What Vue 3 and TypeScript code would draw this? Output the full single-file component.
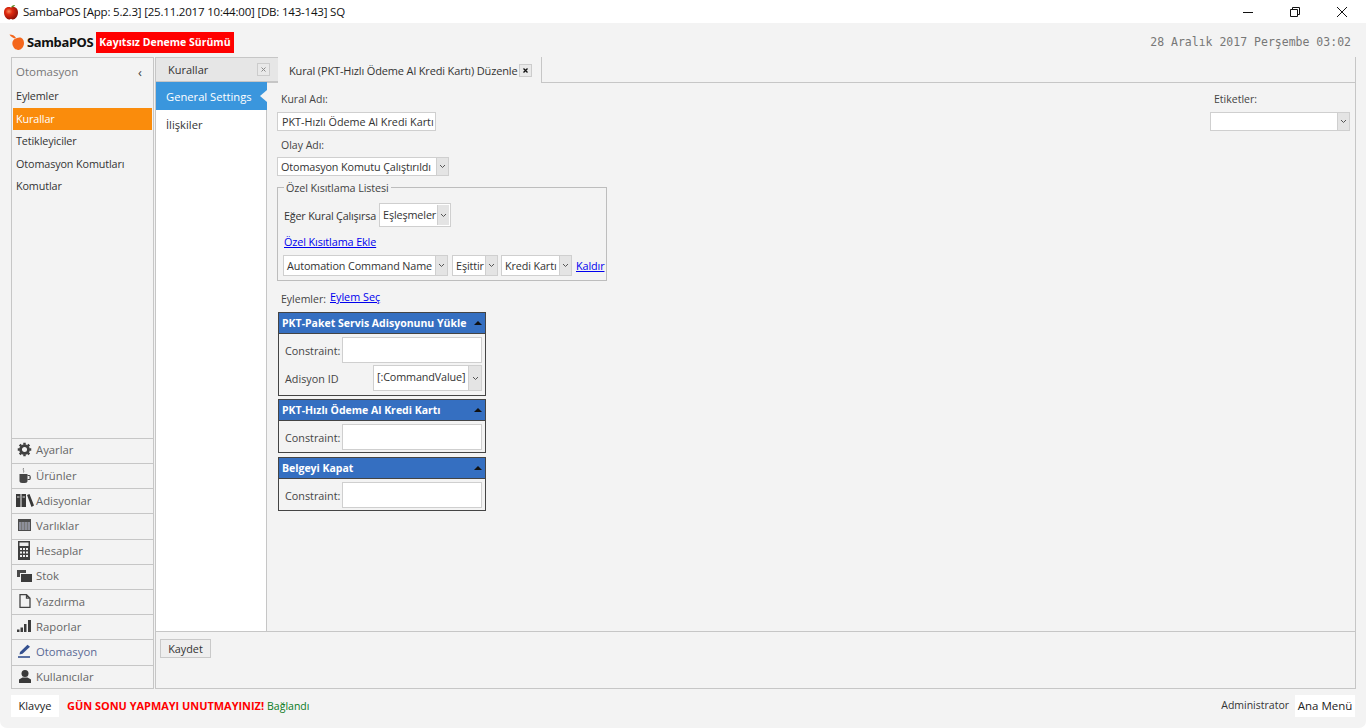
<script setup lang="ts">
const automation: string[] = ['Eylemler', 'Kurallar', 'Tetikleyiciler', 'Otomasyon Komutları', 'Komutlar']
const accordion: { name: string; icon: string }[] = [
  { name: 'Ayarlar', icon: 'gear' },
  { name: 'Ürünler', icon: 'cup' },
  { name: 'Adisyonlar', icon: 'books' },
  { name: 'Varlıklar', icon: 'table' },
  { name: 'Hesaplar', icon: 'calc' },
  { name: 'Stok', icon: 'stock' },
  { name: 'Yazdırma', icon: 'doc' },
  { name: 'Raporlar', icon: 'bars' },
  { name: 'Otomasyon', icon: 'pen' },
  { name: 'Kullanıcılar', icon: 'user' },
]
</script>

<template>
  <div class="window">
    <header class="titlebar">
      <svg class="title-icon" width="16" height="16" viewBox="0 0 16 16">
        <defs>
          <radialGradient id="apple" cx="35%" cy="35%" r="70%">
            <stop offset="0" stop-color="#f58a5a" />
            <stop offset=".35" stop-color="#e02a10" />
            <stop offset="1" stop-color="#8a0e06" />
          </radialGradient>
        </defs>
        <path d="M8 3.500C11 2.300 15 3.500 15 8.500C15 12.500 12 15.500 10 15.500C9 15.500 8.500 15 8 15C7.500 15 7 15.500 6 15.500C4 15.500 1 12.500 1 8.500C1 3.500 5 2.300 8 3.500Z" fill="url(#apple)" />
        <path d="M8 3.500C8.500 2 10 .8 12 1 11.500 2.500 10 3.500 8 3.500Z" fill="#5a8a20" />
      </svg>
      <span class="title-text">SambaPOS [App: 5.2.3] [25.11.2017 10:44:00] [DB: 143-143] SQ</span>
      <div class="win-controls">
        <svg width="12" height="12" viewBox="0 0 12 12"><path d="M1 6.500H11" stroke="#111" fill="none" /></svg>
        <svg width="12" height="12" viewBox="0 0 12 12"><path d="M1.500 3.500H8.500V10.500H1.500ZM3.500 3.500V1.500H10.500V8.500H8.500" stroke="#111" fill="none" /></svg>
        <svg width="12" height="12" viewBox="0 0 12 12"><path d="M1 1L11 11M11 1L1 11" stroke="#111" fill="none" /></svg>
      </div>
    </header>

    <div class="app">
      <div class="topbar">
        <div class="logo">
          <svg width="16" height="18" viewBox="0 0 16 18">
            <path d="M8 5C11 3.500 15 5 15 10C15 14 12 17 9.500 17C8.500 17 8 16.500 7.500 16.500C6 16.500 5 15 4 13C3 11 2.500 6.500 8 5Z" fill="#f4661c" />
            <path d="M6 5.500C4 5 1.500 3.500 .5 1.500C3 1.500 6 2.500 7 5Z" fill="#f4661c" />
          </svg>
          <span class="logo-text">SambaPOS</span>
          <span class="badge">Kayıtsız Deneme Sürümü</span>
        </div>
        <div class="date">28 Aralık 2017 Perşembe 03:02</div>
      </div>

      <div class="main">
        <aside class="sidebar">
          <div class="side-head"><span>Otomasyon</span><b class="chev">‹</b></div>
          <div class="side-list">
            <div v-for="(item, i) in automation" :key="item" class="side-item" :class="{ selected: i === 1 }">{{ item }}</div>
          </div>
          <div class="acc">
            <div v-for="row in accordion" :key="row.name" class="acc-row" :class="{ 'acc-blue': row.icon === 'pen' }">
              <span class="acc-icon">
                <svg v-if="row.icon === 'gear'" width="15" height="15" viewBox="0 0 16 16"><circle cx="8" cy="8" r="4.200" fill="none" stroke="#404040" stroke-width="3" /><path d="M8 .8V3M8 13V15.200M.8 8H3M13 8H15.200M2.900 2.900L4.500 4.500M11.500 11.500L13.100 13.100M13.100 2.900L11.500 4.500M4.500 11.500L2.900 13.100" stroke="#404040" stroke-width="2.600" /></svg>
                <svg v-else-if="row.icon === 'cup'" width="12" height="15" viewBox="0 0 12 15"><path d="M.5 6H8.500V13C8.500 14 7.500 15 6 15H3C1.500 15 .5 14 .5 13Z" fill="#454545" /><path d="M8.500 7.500H10.500C11.500 7.500 11.500 11.500 10.500 11.500H8.500" fill="none" stroke="#454545" stroke-width="1.200" /><path d="M4.500 0C3.500 2 5.500 2.500 4.500 4.500" stroke="#888" fill="none" /></svg>
                <svg v-else-if="row.icon === 'books'" width="18" height="13" viewBox="0 0 18 13"><path d="M0 0H4.500V13H0ZM5.500 0H10V13H5.500ZM11 1L13.500 0L18 11.500L15.500 13Z" fill="#383838" /><path d="M1 3H3.500M6.500 3H9" stroke="#ddd" /></svg>
                <svg v-else-if="row.icon === 'table'" width="13" height="12" viewBox="0 0 13 12"><rect x="0" y="0" width="13" height="12" fill="#4c4c4c" /><rect x="1" y="3" width="11" height="8" fill="#8d8f9a" /><path d="M3.500 3V11M6.500 3V11M9.500 3V11" stroke="#777" /></svg>
                <svg v-else-if="row.icon === 'calc'" width="13" height="19" viewBox="0 0 13 19"><rect x="0" y="0" width="12" height="19" fill="#3e3e3e" /><rect x="1.500" y="1.500" width="9" height="3.500" fill="#eee" /><path d="M2 7H4V9H2ZM5 7H7V9H5ZM8 7H10V9H8ZM2 10.500H4V12.500H2ZM5 10.500H7V12.500H5ZM8 10.500H10V12.500H8ZM2 14H4V16H2ZM5 14H7V16H5ZM8 14H10V16H8Z" fill="#eee" /></svg>
                <svg v-else-if="row.icon === 'stock'" width="16" height="12" viewBox="0 0 16 12"><path d="M0 0H9V3H3V7H0Z" fill="#4a4a4a" /><rect x="4" y="4" width="11" height="8" fill="#3c3c3c" /></svg>
                <svg v-else-if="row.icon === 'doc'" width="12" height="14" viewBox="0 0 12 14"><path d="M1 .7H7.500L11 4.200V13.300H1Z M7.500 .7V4.200H11" fill="none" stroke="#444" stroke-width="1.300" /></svg>
                <svg v-else-if="row.icon === 'bars'" width="15" height="12" viewBox="0 0 15 12"><path d="M0 9.500H2.500V12H0ZM3.500 7.500H6V12H3.500ZM7 4H9.500V12H7ZM11 0H14V12H11Z" fill="#3c3c3c" /></svg>
                <svg v-else-if="row.icon === 'pen'" width="14" height="14" viewBox="0 0 14 14"><path d="M2 8L9.500 .8L12 2.800L4.500 9.800L1.500 10.500Z" fill="#34508f" /><path d="M0 13H12" stroke="#34508f" stroke-width="1.600" /></svg>
                <svg v-else width="14" height="13" viewBox="0 0 14 13"><circle cx="7" cy="3.500" r="3.500" fill="#3a3a3a" /><path d="M1 13V9.500L4.500 7.500H9.500L13 9.500V13Z" fill="#3a3a3a" /></svg>
              </span>
              <span>{{ row.name }}</span>
            </div>
          </div>
        </aside>

        <section class="workspace">
          <div class="tabs">
            <div class="tab tab-off">
              <span>Kurallar</span>
              <span class="tab-x"><svg width="7" height="7" viewBox="0 0 7 7"><path d="M1.500 1.500L5.500 5.500M5.500 1.500L1.500 5.500" stroke="#888" fill="none" /></svg></span>
            </div>
            <div class="tab tab-on">
              <span class="tab-title">Kural (PKT-Hızlı Ödeme Al Kredi Kartı) Düzenle</span>
              <span class="tab-x"><svg width="7" height="7" viewBox="0 0 7 7"><path d="M1.500 1.500L5.500 5.500M5.500 1.500L1.500 5.500" stroke="#111" stroke-width="1.300" fill="none" /></svg></span>
            </div>
          </div>

          <div class="content">
            <nav class="leftnav">
              <div class="nav-on">General Settings<i class="notch"></i></div>
              <div class="nav-off">İlişkiler</div>
            </nav>

            <div class="form">
              <div class="form-left">
                <div class="lbl">Kural Adı:</div>
                <div class="box name-box">PKT-Hızlı Ödeme Al Kredi Kartı</div>
                <div class="lbl lbl-olay">Olay Adı:</div>
                <div class="sel event-sel"><span class="sel-text">Otomasyon Komutu Çalıştırıldı</span><span class="arrow"><svg width="7" height="5" viewBox="0 0 7 5"><path d="M1 1L3.500 3.500L6 1" fill="none" stroke="#555" /></svg></span></div>

                <fieldset class="fset">
                  <legend>Özel Kısıtlama Listesi</legend>
                  <div class="match-row">
                    <span class="match-lbl">Eğer Kural Çalışırsa</span>
                    <div class="sel match-sel"><span class="sel-text">Eşleşmeler</span><span class="arrow"><svg width="7" height="5" viewBox="0 0 7 5"><path d="M1 1L3.500 3.500L6 1" fill="none" stroke="#555" /></svg></span></div>
                  </div>
                  <a class="link add-link">Özel Kısıtlama Ekle</a>
                  <div class="cond-row">
                    <div class="sel cond-a"><span class="sel-text">Automation Command Name</span><span class="arrow"><svg width="7" height="5" viewBox="0 0 7 5"><path d="M1 1L3.500 3.500L6 1" fill="none" stroke="#555" /></svg></span></div>
                    <div class="sel cond-b"><span class="sel-text">Eşittir</span><span class="arrow"><svg width="7" height="5" viewBox="0 0 7 5"><path d="M1 1L3.500 3.500L6 1" fill="none" stroke="#555" /></svg></span></div>
                    <div class="sel cond-c"><span class="sel-text">Kredi Kartı</span><span class="arrow"><svg width="7" height="5" viewBox="0 0 7 5"><path d="M1 1L3.500 3.500L6 1" fill="none" stroke="#555" /></svg></span></div>
                    <a class="link">Kaldır</a>
                  </div>
                </fieldset>

                <div class="actions-head"><span>Eylemler:</span><a class="link">Eylem Seç</a></div>

                <div class="panel">
                  <div class="panel-head"><span>PKT-Paket Servis Adisyonunu Yükle</span><i class="tri"></i></div>
                  <div class="panel-body first-body">
                    <div class="p-row"><span class="p-lbl">Constraint:</span><div class="p-input"></div></div>
                    <div class="p-row p-row2">
                      <span class="p-lbl2">Adisyon ID</span>
                      <div class="sel p-sel"><span class="sel-text">[:CommandValue]</span><span class="arrow"><svg width="7" height="5" viewBox="0 0 7 5"><path d="M1 1L3.500 3.500L6 1" fill="none" stroke="#555" /></svg></span></div>
                    </div>
                  </div>
                </div>
                <div class="panel gap3">
                  <div class="panel-head"><span>PKT-Hızlı Ödeme Al Kredi Kartı</span><i class="tri"></i></div>
                  <div class="panel-body"><div class="p-row"><span class="p-lbl">Constraint:</span><div class="p-input"></div></div></div>
                </div>
                <div class="panel gap4">
                  <div class="panel-head"><span>Belgeyi Kapat</span><i class="tri"></i></div>
                  <div class="panel-body"><div class="p-row"><span class="p-lbl">Constraint:</span><div class="p-input"></div></div></div>
                </div>
              </div>

              <div class="form-right">
                <div class="lbl">Etiketler:</div>
                <div class="sel tag-sel"><span class="sel-text"></span><span class="arrow"><svg width="7" height="5" viewBox="0 0 7 5"><path d="M1 1L3.500 3.500L6 1" fill="none" stroke="#555" /></svg></span></div>
              </div>
            </div>
          </div>

          <div class="savebar"><button class="save" type="button">Kaydet</button></div>
        </section>
      </div>

      <footer class="statusbar">
        <div class="white-btn klavye">Klavye</div>
        <span class="warn">GÜN SONU YAPMAYI UNUTMAYINIZ!</span>
        <span class="conn">Bağlandı</span>
        <span class="admin">Administrator</span>
        <div class="white-btn menu">Ana Menü</div>
      </footer>
    </div>
  </div>
</template>

<style>
html, body { margin: 0; background: #fff; overflow: hidden; }
</style>

<style scoped>
.window {
  width: 1366px;
  height: 728px;
  display: flex;
  flex-direction: column;
  font-family: "Open Sans", "Noto Sans", sans-serif;
  font-size: 11px;
  color: #333;
  background: #fff;
}
.titlebar {
  height: 23px;
  display: flex;
  align-items: center;
  background: #fff;
  flex: none;
}
.title-icon { margin-left: 3px; }
.title-text { margin-left: 4px; font-size: 11.500px; letter-spacing: -.2px; color: #111; }
.win-controls { margin-left: auto; display: flex; gap: 35px; padding-right: 18px; align-items: center; }
.app {
  flex: 1;
  min-height: 0;
  background: #f3f3f3;
  display: flex;
  flex-direction: column;
  border-radius: 0 0 7px 7px;
}
.topbar {
  height: 34px;
  box-sizing: border-box;
  flex: none;
  display: flex;
  align-items: center;
  justify-content: space-between;
  padding: 4px 15px 0 9px;
}
.logo { display: flex; align-items: center; }
.logo-text { font-family: "Noto Sans", sans-serif; font-weight: 700; font-size: 13px; color: #111; margin-left: 2px; letter-spacing: -.35px; }
.badge {
  margin-left: 3px;
  background: #f00;
  color: #fff;
  font-weight: 700;
  font-size: 10.500px;
  height: 21px;
  line-height: 21px;
  padding: 0 3px;
  white-space: nowrap;
}
.date { font-family: "DejaVu Sans Mono", monospace; font-size: 11.500px; color: #777; }
.main {
  height: 632px;
  flex: none;
  display: flex;
  padding: 0 10px 0 11px;
  gap: 1px;
}
.sidebar {
  width: 141px;
  flex: none;
  border: 1px solid #c6c6c6;
  display: flex;
  flex-direction: column;
  box-sizing: content-box;
  height: 630px;
}
.side-head {
  height: 27px;
  display: flex;
  align-items: center;
  justify-content: space-between;
  padding: 0 11px 0 4px;
  font-size: 11.500px;
  color: #777;
  flex: none;
}
.chev { font-weight: 400; font-size: 13px; color: #444; }
.side-list { flex: 1; padding: 0 1px; }
.side-item { height: 22.500px; line-height: 22px; padding-left: 3px; color: #333; font-size: 10.800px; letter-spacing: -.12px; }
.side-item.selected { background: #fa8c0c; color: #fff; }
.acc { flex: none; }
.acc-row {
  height: 25.200px;
  box-sizing: border-box;
  border-top: 1px solid #c6c6c6;
  padding-bottom: 2px;
  display: flex;
  align-items: center;
  font-size: 11.300px;
  color: #666;
}
.acc-row:last-child { height: 23.500px; padding-bottom: 0; }
.acc-blue { color: #5a6a95; }
.acc-icon { width: 24px; display: flex; justify-content: center; padding-left: 1px; box-sizing: border-box; }
.workspace {
  flex: 1;
  min-width: 0;
  border: 1px solid #c6c6c6;
  border-top: none;
  display: flex;
  flex-direction: column;
}
.tabs { height: 25px; display: flex; flex: none; }
.tab { display: flex; align-items: center; box-sizing: border-box; color: #333; padding-top: 1px; }
.tab-off {
  width: 122px;
  height: 25px;
  background: #e6e6e6;
  border-top: 1px solid #c6c6c6;
  border-bottom: 1px solid #c6c6c6;
  padding: 0 8px 0 12px;
  justify-content: space-between;
}
.tab-on {
  width: 264px;
  height: 26px;
  background: #f3f3f3;
  border-right: 1px solid #c6c6c6;
  padding: 1px 9px 0 11px;
  justify-content: space-between;
  position: relative;
  z-index: 1;
  white-space: nowrap;
}
.tab-title { letter-spacing: -.15px; }
.tab-x {
  width: 11px;
  height: 11px;
  background: #e9e9e9;
  border: 1px solid #ccc;
  display: flex;
  align-items: center;
  justify-content: center;
}
.content {
  flex: 1;
  min-height: 0;
  display: flex;
  border-top: 1px solid #c6c6c6;
}
.leftnav { width: 110px; flex: none; background: #fff; border-right: 1px solid #c6c6c6; }
.nav-on {
  height: 28px;
  margin-top: -1px;
  background: #3a96dd;
  color: #fff;
  font-size: 11.200px;
  line-height: 30px;
  padding-left: 10px;
  position: relative;
  margin-right: -1px;
}
.notch {
  position: absolute;
  right: 0;
  top: 8px;
  width: 0;
  height: 0;
  border: 6px solid transparent;
  border-left: none;
  border-right: 7px solid #f3f3f3;
}
.nav-off { font-size: 11.200px; height: 28px; line-height: 30px; padding-left: 10px; color: #333; }
.form { flex: 1; min-width: 0; display: flex; justify-content: space-between; padding: 7px 5px 0 10px; }
.form-left { width: 330px; }
.lbl { height: 18px; line-height: 18px; padding-left: 4px; font-size: 10.500px; color: #444; }
.lbl-olay { margin-top: 5px; height: 21px; line-height: 18px; }
.box, .sel {
  background: #fff;
  border: 1px solid #cfcfcf;
  box-sizing: border-box;
  height: 19px;
  line-height: 17px;
  color: #333;
  white-space: nowrap;
  font-size: 10.800px;
}
.lbl + .box { margin-top: 4px; }
.name-box { width: 159px; padding-left: 4px; overflow: hidden; }
.sel { display: flex; }
.sel-text { flex: 1; min-width: 0; padding-left: 3px; overflow: hidden; letter-spacing: -.12px; }
.arrow {
  width: 11px;
  flex: none;
  background: #e4e4e4;
  border-left: 1px solid #cfcfcf;
  display: flex;
  align-items: center;
  justify-content: center;
}
.event-sel { width: 172px; }
.fset {
  margin: 5px 0 0;
  padding: 0 2px 0 6px;
  width: 330px;
  height: 100px;
  box-sizing: border-box;
  border: 1px solid #bdbdbd;
}
.fset legend { padding: 0 2px; font-size: 10.800px; line-height: 13px; color: #444; letter-spacing: -.1px; }
.match-row { display: flex; align-items: center; gap: 3px; margin-top: 9px; white-space: nowrap; font-size: 10.800px; }
.match-lbl { letter-spacing: -.2px; }
.match-sel { width: 72px; height: 24px; line-height: 22px; }
.match-sel .arrow { height: 20px; margin-top: 1px; margin-right: 1px; }
.link { color: #00e; text-decoration: underline; font-size: 10.800px; white-space: nowrap; }
.add-link { display: block; margin-top: 7px; line-height: 15px; height: 15px; letter-spacing: -.1px; }
.cond-row { display: flex; align-items: center; margin: 6px 0 0 -1px; }
.cond-row .sel { height: 21px; line-height: 19px; }
.cond-a { width: 165px; }
.cond-b { width: 46px; margin-left: 4px; }
.cond-c { width: 71px; margin-left: 3px; }
.cond-row .link { margin-left: 4px; letter-spacing: -.1px; }
.actions-head { display: flex; gap: 4px; margin-top: 9px; padding-left: 4px; height: 22px; font-size: 10.500px; color: #444; line-height: 18px; }
.actions-head .link { margin-top: -2px; }
.panel { width: 208px; margin-left: 1px; border: 1px solid #444; box-sizing: border-box; }
.gap3 { margin-top: 3px; }
.gap4 { margin-top: 4px; }
.panel-head {
  height: 20px;
  background: #356fc1;
  color: #fff;
  font-weight: 700;
  font-size: 10.500px;
  display: flex;
  justify-content: space-between;
  align-items: center;
  padding: 0 3px;
  border-bottom: 1px solid #444;
  white-space: nowrap;
}
.tri { width: 0; height: 0; border: 4px solid transparent; border-top: none; border-bottom: 4px solid #111; }
.panel-body { padding: 3px 3px 2px 6px; }
.first-body { padding-bottom: 4px; }
.p-row { display: flex; align-items: center; justify-content: space-between; height: 26px; }
.p-lbl, .p-lbl2 { font-size: 10.800px; color: #444; }
.p-input { width: 140px; height: 26px; background: #fff; border: 1px solid #cfcfcf; box-sizing: border-box; }
.p-row2 { margin-top: 2px; }
.p-sel { width: 109px; height: 26px; line-height: 22px; }
.p-sel .arrow { width: 12px; }
.form-right { width: 140px; }
.tag-sel { margin-top: 4px; }
.savebar { height: 57px; flex: none; border-top: 1px solid #c6c6c6; padding: 7px 4px; box-sizing: border-box; }
.save {
  display: block;
  width: 51px;
  height: 19px;
  padding: 0;
  background: #eee;
  border: 1px solid #c9c9c9;
  font: inherit;
  font-size: 10.800px;
  color: #333;
  line-height: 17px;
}
.statusbar { flex: 1; min-height: 0; display: flex; align-items: flex-start; padding: 6px 11px 0 11px; }
.white-btn { background: #fff; height: 22px; line-height: 22px; text-align: center; color: #222; font-size: 11px; }
.klavye { width: 48px; }
.warn { margin-left: 8px; font-weight: 700; color: #f00; font-size: 10.950px; line-height: 22px; }
.conn { margin-left: 3px; color: #0a7a1c; font-size: 10.500px; line-height: 22px; }
.admin { margin-left: auto; margin-right: 6px; color: #333; font-size: 10.500px; line-height: 21px; }
.menu { width: 60px; font-size: 11.500px; }
</style>
